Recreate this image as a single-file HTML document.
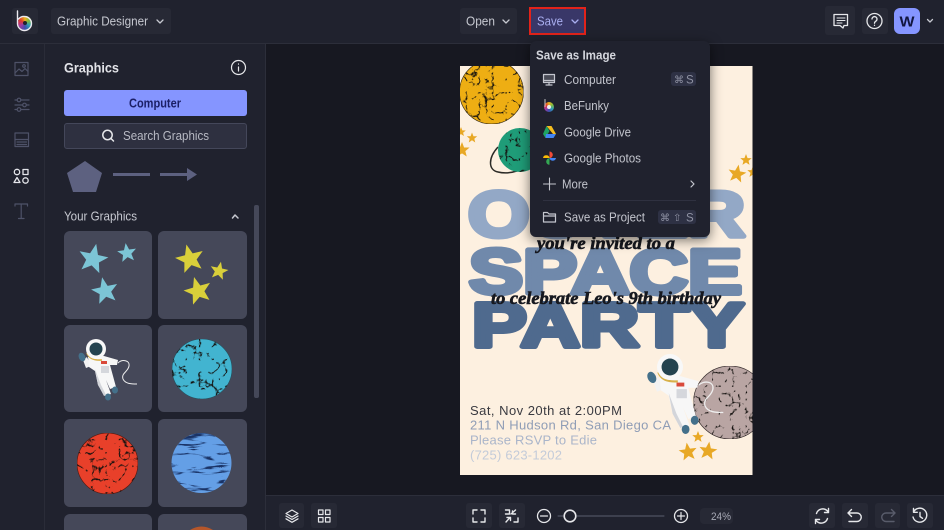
<!DOCTYPE html>
<html style="height:530px;overflow:hidden"><head><meta charset="utf-8"><style>
html,body{margin:0;padding:0;background:#171821}
body{width:944px;height:530px;overflow:hidden;font-family:"Liberation Sans",sans-serif}
#r{position:relative;width:944px;height:530px;overflow:hidden}
.a{position:absolute}
.t{background:#272935;border-radius:3px}
svg{position:absolute;left:0;top:0}
.w{position:absolute;border-radius:50%;background:conic-gradient(#e8b21f,#7fbb3f,#2f9fb5,#3d4fb0,#a23aa0,#e0392d,#e8b21f)}
</style></head><body><div id="r">
<div class="a" style="left:0;top:0;width:944px;height:43px;background:#20222e;border-bottom:1px solid #2c2e3a"></div>
<div class="a" style="left:0;top:44px;width:44px;height:486px;background:#20222e;border-right:1px solid #2a2c38"></div>
<div class="a" style="left:45px;top:44px;width:220px;height:486px;background:#20222e;border-right:1px solid #2c2e3a"></div>
<div class="a" style="left:266px;top:495px;width:678px;height:35px;background:#20222e;border-top:1px solid #2c2e3a"></div>

<div class="a t" style="left:12px;top:8px;width:26px;height:26px"></div>
<div class="a t" style="left:51px;top:8px;width:120px;height:26px"></div>
<div class="a t" style="left:460px;top:8px;width:57px;height:26px"></div>
<div class="a" style="left:529px;top:7px;width:53px;height:24px;border:2px solid #e2231a;background:#393768"></div>
<div class="a t" style="left:825px;top:6px;width:30px;height:29px"></div>
<div class="a t" style="left:862px;top:8px;width:26px;height:26px"></div>
<div class="a" style="left:894px;top:8px;width:26px;height:26px;border-radius:6px;background:#8595ff"></div>

<div class="a" style="left:64px;top:90px;width:183px;height:26px;background:#8595ff;border-radius:3px"></div>
<div class="a" style="left:64px;top:123px;width:181px;height:24px;background:#2e3040;border:1px solid #44475a;border-radius:3px"></div>

<div class="a" style="left:64px;top:231px;width:88px;height:88px;background:#454859;border-radius:6px"></div>
<div class="a" style="left:158px;top:231px;width:89px;height:88px;background:#454859;border-radius:6px"></div>
<div class="a" style="left:64px;top:325px;width:88px;height:87px;background:#454859;border-radius:6px"></div>
<div class="a" style="left:158px;top:325px;width:89px;height:87px;background:#454859;border-radius:6px"></div>
<div class="a" style="left:64px;top:419px;width:88px;height:88px;background:#454859;border-radius:6px"></div>
<div class="a" style="left:158px;top:419px;width:89px;height:88px;background:#454859;border-radius:6px"></div>
<div class="a" style="left:64px;top:514px;width:88px;height:16px;background:#454859;border-radius:6px 6px 0 0"></div>
<div class="a" style="left:158px;top:514px;width:89px;height:16px;background:#454859;border-radius:6px 6px 0 0"></div>
<div class="a" style="left:254px;top:205px;width:5px;height:193px;background:#454859;border-radius:2px"></div>

<div class="a t" style="left:279px;top:503px;width:25px;height:25px"></div>
<div class="a t" style="left:311px;top:503px;width:26px;height:25px"></div>
<div class="a t" style="left:466px;top:503px;width:26px;height:25px"></div>
<div class="a t" style="left:499px;top:503px;width:26px;height:25px"></div>
<div class="a t" style="left:700px;top:508px;width:33px;height:16px;border-radius:4px"></div>
<div class="a t" style="left:809px;top:503px;width:26px;height:25px"></div>
<div class="a t" style="left:842px;top:503px;width:26px;height:25px"></div>
<div class="a t" style="left:875px;top:503px;width:25px;height:25px"></div>
<div class="a t" style="left:907px;top:503px;width:26px;height:25px"></div>

<!-- Poster -->
<svg width="944" height="530" viewBox="0 0 944 530">
<defs>
<clipPath id="pc"><rect x="460" y="66" width="292.500" height="409"/></clipPath>
<filter id="n" x="0" y="0" width="100%" height="100%" color-interpolation-filters="sRGB">
<feTurbulence type="turbulence" baseFrequency=".075" numOctaves="3" seed="4"/>
<feColorMatrix values="0 0 0 0 .08 0 0 0 0 .07 0 0 0 0 .06 -10 0 0 0 1.500"/>
<feComposite in2="SourceAlpha" operator="in" result="d"/>
<feMerge><feMergeNode in="SourceGraphic"/><feMergeNode in="d"/></feMerge>
</filter>
<filter id="s" x="0" y="0" width="100%" height="100%" color-interpolation-filters="sRGB">
<feTurbulence type="turbulence" baseFrequency=".018 .11" numOctaves="3" seed="8"/>
<feColorMatrix values="0 0 0 0 .1 0 0 0 0 .2 0 0 0 0 .4 -10 0 0 0 1.800"/>
<feComposite in2="SourceAlpha" operator="in" result="d"/>
<feMerge><feMergeNode in="SourceGraphic"/><feMergeNode in="d"/></feMerge>
</filter>
<g id="st"><polygon points="0,-10 2.600,-3.200 9.500,-3.100 4.200,1.400 5.900,8.100 0,4.200 -5.900,8.100 -4.200,1.400 -9.500,-3.100 -2.600,-3.200"/></g>
<g id="astro">
<path d="M22 14C26 10 34 11 33 17C32 23 25 24 27 30C29 35 36 35 41 35" fill="none" stroke="#eee" stroke-width="1"/>
<path d="M-9 8L-13 11L-10 19L-5 17Z" fill="#f2f2f2"/>
<path d="M-8 8L8 7L22 11L21 16L14 16L17 27L20 38L14 40L10 31L15 45L9 47L2 36L-1 22L-7 18Z" fill="#f7f7f7"/>
<path d="M-1 20L5 36L10 46L8 47L2 36Z" fill="#d3d5da"/>
<path d="M5 17h8v7h-8z" fill="#d5d7dc"/>
<path d="M5 12h6v3h-6z" fill="#d9493a"/>
<path d="M-9 4Q-6 12 6 11" fill="none" stroke="#d8b14a" stroke-width="1.600"/>
<circle r="10" fill="#f8f8f8"/><circle cy="0" r="6.500" fill="#24434f"/>
<ellipse cx="-14" cy="8" rx="3.200" ry="4.500" fill="#44708a" transform="rotate(-25 -14 8)"/>
<ellipse cx="12" cy="48" rx="3" ry="3.500" fill="#44708a"/>
<ellipse cx="19" cy="41" rx="3" ry="3.500" fill="#44708a"/>
</g>
</defs>
<rect x="460" y="66" width="292.500" height="409" fill="#fdf0e0"/>
<g clip-path="url(#pc)">
<circle cx="491.500" cy="92" r="32" fill="#eeae13" stroke="#3a2c10" stroke-width=".7" filter="url(#n)"/>
<path d="M498 147C488 158 488 170 498 172C510 175 525 170 535 160" fill="none" stroke="#2b2a26" stroke-width="1.500"/>
<circle cx="520" cy="150" r="22" fill="#1f9c78" filter="url(#n)"/>
<g fill="#e8a825">
<use href="#st" transform="translate(472 138) scale(.55)"/>
<use href="#st" transform="translate(462 150) scale(.8)"/>
<use href="#st" transform="translate(461 132) scale(.5)"/>
<use href="#st" transform="translate(746 160) scale(.6)"/>
<use href="#st" transform="translate(737 174) scale(.95) rotate(10)"/>
<use href="#st" transform="translate(753 172) scale(.6)"/>
<use href="#st" transform="translate(698 437) scale(.6)"/>
<use href="#st" transform="translate(688 452) scale(.95) rotate(-8)"/>
<use href="#st" transform="translate(708 451) scale(.95) rotate(8)"/>
</g>
<g font-family="Liberation Sans" font-weight="700" stroke-linejoin="round" font-size="64">
<text x="468" y="236.500" textLength="277" lengthAdjust="spacingAndGlyphs" fill="#93a8c6" stroke="#93a8c6" stroke-width="5">OUTER</text>
<text x="469" y="293.500" font-size="63" textLength="273" lengthAdjust="spacingAndGlyphs" fill="#7089ab" stroke="#7089ab" stroke-width="5">SPACE</text>
<text x="472" y="346.500" font-size="62" textLength="272" lengthAdjust="spacingAndGlyphs" fill="#4f6a8e" stroke="#4f6a8e" stroke-width="5">PARTY</text>
</g>
<g font-family="Liberation Serif" font-style="italic" font-weight="700" font-size="18" fill="#16181f" stroke="#16181f" stroke-width=".6">
<text x="537" y="249" textLength="138" lengthAdjust="spacingAndGlyphs">you're invited to a</text>
<text x="491" y="304" textLength="230" lengthAdjust="spacingAndGlyphs">to celebrate Leo's 9th birthday</text>
</g>
<circle cx="730" cy="402.500" r="36.500" fill="#b9a5a3" stroke="#3a3030" stroke-width=".7" filter="url(#n)"/>
<use href="#astro" transform="translate(670 367) scale(1.300)"/>
<g font-size="13" font-family="Liberation Sans">
<text x="470" y="415" textLength="152" fill="#3a3a40">Sat, Nov 20th at 2:00PM</text>
<text x="470" y="429.500" textLength="201" fill="#8f9db6">211 N Hudson Rd, San Diego CA</text>
<text x="470" y="444.500" textLength="127" fill="#aab5ca">Please RSVP to Edie</text>
<text x="470" y="459.500" textLength="92" fill="#c3cbd9">(725) 623-1202</text>
</g>
</g>
</svg>

<!-- Menu -->
<div class="a" style="left:530px;top:41px;width:180px;height:196px;background:#20222e;border-radius:6px;box-shadow:0 3px 12px rgba(0,0,0,.55)"></div>
<div class="a" style="left:671px;top:72px;width:25px;height:14px;background:#2e3144;border-radius:3px"></div>
<div class="a" style="left:658px;top:210px;width:38px;height:14px;background:#2e3144;border-radius:3px"></div>
<div class="a" style="left:543px;top:200px;width:153px;height:1px;background:#2f3140"></div>

<div class="w" style="left:18px;top:16px;width:14px;height:14px"></div>
<div class="w" style="left:544px;top:102px;width:10px;height:10px"></div>

<svg width="944" height="530" viewBox="0 0 944 530">
<g font-family="Liberation Sans">
<g font-size="13" fill="#c6c8d0">
<text x="57" y="25.500" textLength="91" lengthAdjust="spacingAndGlyphs">Graphic Designer</text>
<text x="466" y="25.500" textLength="29" lengthAdjust="spacingAndGlyphs">Open</text>
<text x="537" y="25.500" textLength="26" lengthAdjust="spacingAndGlyphs" fill="#a9aef0">Save</text>
</g>
<text x="536" y="59.500" font-size="12.500" font-weight="700" fill="#d3d5dc" textLength="80" lengthAdjust="spacingAndGlyphs">Save as Image</text>
<g font-size="12.500" fill="#c2c4cc">
<text x="564" y="84" textLength="52" lengthAdjust="spacingAndGlyphs">Computer</text>
<text x="564" y="110" textLength="45" lengthAdjust="spacingAndGlyphs">BeFunky</text>
<text x="564" y="136.500" textLength="67" lengthAdjust="spacingAndGlyphs">Google Drive</text>
<text x="564" y="162.500" textLength="77" lengthAdjust="spacingAndGlyphs">Google Photos</text>
<text x="562" y="188.500" textLength="26" lengthAdjust="spacingAndGlyphs">More</text>
<text x="564" y="221.500" textLength="81" lengthAdjust="spacingAndGlyphs">Save as Project</text>
</g>
<g font-family="DejaVu Sans" font-size="10" fill="#8f92a3">
<text x="674" y="83">⌘</text><text x="686" y="83.500" font-family="Liberation Sans" font-size="11.500">S</text>
<text x="660" y="221">⌘</text><text x="673" y="221">⇧</text><text x="686" y="221.500" font-family="Liberation Sans" font-size="11.500">S</text>
</g>
<text x="64" y="72.500" font-size="14" font-weight="700" fill="#e2e3e8" textLength="55" lengthAdjust="spacingAndGlyphs">Graphics</text>
<text x="129" y="107.500" font-size="12.500" font-weight="700" fill="#1b1f66" textLength="52" lengthAdjust="spacingAndGlyphs">Computer</text>
<text x="123" y="140" font-size="12.500" fill="#b8bac4" textLength="86" lengthAdjust="spacingAndGlyphs">Search Graphics</text>
<text x="64" y="220.500" font-size="12.500" fill="#c6c8d0" textLength="73" lengthAdjust="spacingAndGlyphs">Your Graphics</text>
<text x="711" y="520" font-size="11" fill="#a8aab6" textLength="20" lengthAdjust="spacingAndGlyphs">24%</text>
<text x="899.500" y="26.500" font-size="15" font-weight="700" fill="#12163f" textLength="15" lengthAdjust="spacingAndGlyphs">W</text>
</g>

<g fill="none" stroke-linecap="round" stroke-linejoin="round">
<!-- Logo -->
<path d="M17.500 11V24A7 7 0 1 0 24.500 16.500A7 7 0 0 0 18.500 19" stroke="#eceaf0" stroke-width="1.400"/>
<circle cx="25" cy="23" r="2" fill="#20222e"/>
<!-- chevrons -->
<g stroke="#c6c8d0" stroke-width="1.300">
<path d="M157 20l3 3 3-3"/><path d="M503 20l3 3 3-3"/><path d="M927.500 19.500l2.500 2.500 2.500-2.500"/>
<path d="M232.500 218l2.500-3 3 3" stroke-width="1.500"/>
</g>
<path d="M572 20l3 3 3-3" stroke="#a9aef0" stroke-width="1.300"/>
<!-- Header right -->
<g stroke="#e6e7ea" stroke-width="1.300">
<path d="M834 14.500h13.500v11h-3.500l-1 2.500-3-2.500h-6z"/><path d="M837 18h8M837 20.500h8M837 23h5" stroke-width="1"/>
<circle cx="874.500" cy="21" r="7.500"/>
<path d="M872 19a2.500 2.500 0 1 1 3.800 2.200c-.9.600-1.300 1-1.300 2"/><path d="M874.500 25.300v.1"/>
</g>
<!-- Rail -->
<g stroke="#4e5268" stroke-width="1.200">
<rect x="15" y="62.500" width="13" height="13"/><path d="M15 73l4-4 3 2.500 3-3 3 3"/><circle cx="24" cy="66" r="1.300"/>
<path d="M15 100h14M15 105h14M15 109.500h14"/><circle cx="19" cy="100" r="1.800" fill="#20222e"/><circle cx="24.500" cy="105" r="1.800" fill="#20222e"/><circle cx="19" cy="109.500" r="1.800" fill="#20222e"/>
<rect x="15" y="133" width="13.500" height="13.500"/><path d="M15 139.500h13.500M17 142h9.500M17 144.500h9.500"/>
<path d="M15 206v-2h12.500v2M21.200 204v14M18.500 218.500h5.500"/>
</g>
<g stroke="#e4e5ea" stroke-width="1.300">
<circle cx="17" cy="172" r="2.700"/><rect x="23" y="169.500" width="5" height="5"/><path d="M17 177.500l3 5h-6z"/><circle cx="25.500" cy="180.500" r="2.700"/>
</g>
<!-- Panel icons -->
<g stroke="#e6e7ea" stroke-width="1.200"><circle cx="238.500" cy="67.500" r="7"/><path d="M238.500 67v4M238.500 64v.1"/></g>
<g stroke="#e6e7ea" stroke-width="1.500"><circle cx="107.500" cy="135" r="4.700"/><path d="M111 138.500l2.500 2.500"/></g>
<polygon points="85,161 102,173 96,192 73,192 67,173" fill="#5d6180"/>
<path d="M113 174.500h37M160 174.500h27" stroke="#5d6180" stroke-width="3" stroke-linecap="butt"/>
<polygon points="187,168 197,174.500 187,181" fill="#5d6180"/>
<!-- Menu icons -->
<g stroke="#c4c6ce" stroke-width="1.200">
<rect x="543.500" y="74.500" width="11" height="8" fill="#c4c6ce" fill-opacity=".25"/><path d="M543.500 80.500h11M549 82.500v2.500M546 85h6"/>
<path d="M543.500 184h12M549.500 178v12" stroke-width="1.100"/>
<path d="M691 181l3 3-3 3"/>
<path d="M543.500 222v-9.500h4l1.500 1.500h6.500v8zM543.500 216h12"/>
</g>
<path d="M545 99.500v7" stroke="#ddd" stroke-width=".9"/>
<circle cx="549" cy="107" r="2" fill="#eee"/>
<!-- Drive -->
<g stroke="none">
<polygon points="546.500,126 551.500,126 556,134 553,134" fill="#f5bd1e"/>
<polygon points="546.500,126 549.500,131 545.500,138 543,134" fill="#1fa463"/>
<polygon points="546,134 556,134 553.500,138 545.500,138" fill="#4285f4"/>
<!-- Photos -->
<path d="M549.500 151.500a3.300 3.300 0 0 1 0 6.600z" fill="#f04b37"/>
<path d="M556 158a3.300 3.300 0 0 1-6.500 0z" fill="#4285f4"/>
<path d="M549.500 164.800a3.300 3.300 0 0 1 0-6.600z" fill="#34a853"/>
<path d="M543 158a3.300 3.300 0 0 1 6.500 0z" fill="#fbbc05"/>
</g>
<!-- Bottom icons -->
<g stroke="#e6e7ea" stroke-width="1.200">
<path d="M292 510l6 3.500-6 3.500-6-3.500zM286 516l6 3.500 6-3.500M286 518.800l6 3.500 6-3.500"/>
<rect x="318.500" y="510" width="4.500" height="4.500"/><rect x="325.500" y="510" width="4.500" height="4.500"/><rect x="318.500" y="517.500" width="4.500" height="4.500"/><rect x="325.500" y="517.500" width="4.500" height="4.500"/>
<g stroke-width="1.400">
<path d="M473 514v-4h4M481 510h4v4M485 518v4h-4M477 522h-4v-4"/>
<path d="M505.500 510h4v4h-4M511 514l4.500-4M515.500 514h-3v-3M506 522l4-4.500M507 517.500h3.500v3M514 522h4v-4"/>
</g>
<circle cx="544" cy="516" r="6.500" stroke-width="1.300"/><path d="M540.500 516h7"/>
<circle cx="681" cy="516" r="6.500" stroke-width="1.300"/><path d="M677.500 516h7M681 512.500v7"/>
</g>
<path d="M558 516h5M577 516h87" stroke="#5a5d6d" stroke-width="1"/>
<circle cx="570" cy="516" r="5.800" stroke="#e6e7ea" stroke-width="1.600"/>
<g stroke="#e6e7ea" stroke-width="1.400">
<path d="M816.500 513.500a6.500 6.500 0 0 1 11-2.500l1 1.500M828.500 508.500v4h-4"/>
<path d="M827.500 518.500a6.500 6.500 0 0 1-11 2.500l-1-1.500M815.500 523.500v-4h4"/>
<path d="M851.500 509.500l-3.500 3.500 3.500 3.500M848 513h9a4 4 0 0 1 0 8.500h-8"/>
<path d="M913.500 512a7 7 0 1 1-.5 5M913.500 508.500v3.800h3.800M920 512.500v4l2.500 1.800"/>
</g>
<g stroke="#595c6b" stroke-width="1.400"><path d="M891.500 509.500l3.500 3.500-3.500 3.500M895 513h-9a4 4 0 0 0 0 8.500h8"/></g>
</g>

<!-- Tile graphics -->
<g fill="#7cc5d6">
<use href="#st" transform="translate(93 259) scale(1.550) rotate(12)"/>
<use href="#st" transform="translate(127 253) scale(1) rotate(-8)"/>
<use href="#st" transform="translate(105 291) scale(1.400) rotate(-12)"/>
</g>
<g fill="#d9cf3a">
<use href="#st" transform="translate(190 259) scale(1.500) rotate(-14)"/>
<use href="#st" transform="translate(219 271) scale(.95) rotate(12)"/>
<use href="#st" transform="translate(198 291) scale(1.450) rotate(-16)"/>
</g>
<use href="#astro" transform="translate(96 349)"/>
<circle cx="202" cy="369" r="30" fill="#42b4d0" stroke="#24525f" stroke-width=".6" filter="url(#n)"/>
<circle cx="107.500" cy="463.500" r="30.500" fill="#e8402a" stroke="#5a1a10" stroke-width=".7" filter="url(#n)"/>
<circle cx="201.500" cy="463" r="30" fill="#649fe6" filter="url(#s)"/>
<path d="M190 530Q201.500 523 213 530Z" fill="#b5562a"/>
</svg>
</div></body></html>
